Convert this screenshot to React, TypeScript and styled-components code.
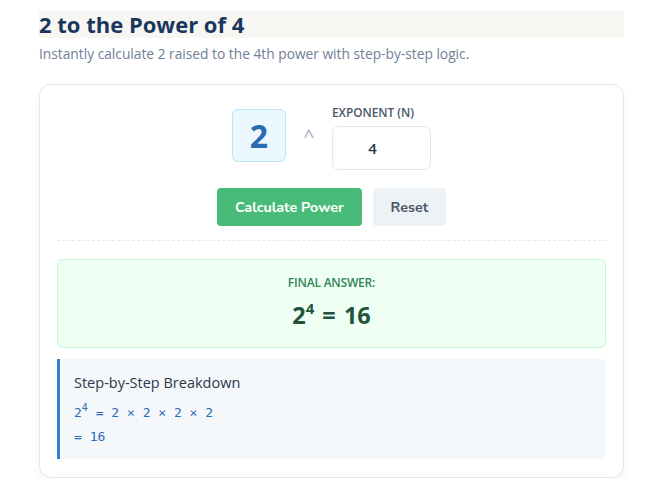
import React from "react";
import styled, { createGlobalStyle } from "styled-components";

const Global = createGlobalStyle`
  html, body { margin: 0; padding: 0; background: #ffffff; }
  body { font-family: "Open Sans", "Noto Sans", sans-serif; }
  * { box-sizing: border-box; }
`;

const Page = styled.div`
  margin: 11px 31px 0 39px;
`;

const Title = styled.h1`
  margin: 0;
  background: #f6f6f2;
  color: #1a365d;
  font-family: "Open Sans", "Noto Sans", sans-serif;
  font-size: 22px;
  font-weight: 700;
  line-height: 27px;
`;

const Subtitle = styled.p`
  margin: 7px 0 0;
  color: #718096;
  font-size: 13.75px;
  line-height: 18px;
`;

const Card = styled.div`
  margin-top: 21px;
  border: 1px solid #e2e8f0;
  border-radius: 12px;
  box-shadow: 0 4px 8px rgba(0, 0, 0, 0.05);
  padding: 19px 17px 18px;
  background: #fff;
`;

const InputRow = styled.div`
  display: flex;
  justify-content: center;
  align-items: flex-end;
`;

const Base = styled.div`
  width: 54px;
  height: 53px;
  margin-bottom: 8px;
  border: 1px solid #bee3f8;
  border-radius: 6px;
  background: #ebf8ff;
  color: #2b6cb0;
  font-family: "Noto Sans", sans-serif;
  font-size: 32px;
  font-weight: 700;
  display: flex;
  align-items: center;
  justify-content: center;
`;

const Caret = styled.span`
  width: 46px;
  margin-bottom: 24px;
  text-align: center;
  color: #a0aec0;
  font-size: 19px;
  line-height: 20px;
`;

const Field = styled.div`
  display: flex;
  flex-direction: column;
`;

const Label = styled.label`
  font-size: 11.8px;
  font-weight: 600;
  color: #4a5568;
  line-height: 16px;
  margin-bottom: 6px;
`;

const Input = styled.div`
  width: 99px;
  height: 44px;
  padding-right: 18px;
  border: 1px solid #e2e8f0;
  border-radius: 6px;
  display: flex;
  align-items: center;
  justify-content: center;
  color: #2d3748;
  font-size: 15px;
  font-weight: 600;
`;

const Buttons = styled.div`
  display: flex;
  justify-content: center;
  gap: 11px;
  margin-top: 18px;
  padding-bottom: 14px;
  border-bottom: 1px dashed #e2e8f0;
`;

const Button = styled.button<{ $primary?: boolean }>`
  height: 38px;
  padding: 0 18px;
  border: none;
  border-radius: 4px;
  background: ${(p) => (p.$primary ? "#48bb78" : "#edf2f7")};
  color: ${(p) => (p.$primary ? "#ffffff" : "#4a5568")};
  font-family: "Nunito", "Noto Sans", sans-serif;
  font-size: 14.3px;
  font-weight: 700;
`;

const Answer = styled.div`
  margin-top: 18px;
  border: 1px solid #c6f6d5;
  border-radius: 6px;
  background: #f0fff4;
  padding: 15px 0 16px;
  text-align: center;
`;

const AnswerLabel = styled.div`
  color: #2f855a;
  font-size: 12px;
  font-weight: 600;
  line-height: 16px;
  letter-spacing: -0.2px;
`;

const AnswerValue = styled.div`
  margin-top: 9px;
  color: #22543d;
  font-size: 23.5px;
  font-weight: 700;
  line-height: 31px;
  word-spacing: 2px;
  sup { font-size: 15px; vertical-align: 10px; line-height: 0; }
`;

const Steps = styled.div`
  margin-top: 11px;
  border-left: 3px solid #3182ce;
  border-radius: 0 6px 6px 0;
  background: #f4f8fb;
  padding: 14px 14px 10px;
`;

const StepsTitle = styled.div`
  color: #2d3748;
  font-size: 14.5px;
  line-height: 20px;
  margin-bottom: 8px;
`;

const StepLine = styled.div`
  font-family: "DejaVu Sans Mono", "Liberation Mono", monospace;
  font-size: 13px;
  color: #2b6cb0;
  line-height: 24px;
  sup { font-size: 10px; vertical-align: 6px; line-height: 0; }
`;

export default function App() {
  return (
    <>
      <Global />
      <Page>
        <Title>2 to the Power of 4</Title>
        <Subtitle>Instantly calculate 2 raised to the 4th power with step-by-step logic.</Subtitle>
        <Card>
          <InputRow>
            <Base>2</Base>
            <Caret>^</Caret>
            <Field>
              <Label>EXPONENT (N)</Label>
              <Input>4</Input>
            </Field>
          </InputRow>
          <Buttons>
            <Button $primary>Calculate Power</Button>
            <Button>Reset</Button>
          </Buttons>
          <Answer>
            <AnswerLabel>FINAL ANSWER:</AnswerLabel>
            <AnswerValue>
              2<sup>4</sup> = 16
            </AnswerValue>
          </Answer>
          <Steps>
            <StepsTitle>Step-by-Step Breakdown</StepsTitle>
            <StepLine>
              2<sup>4</sup> = 2 × 2 × 2 × 2
            </StepLine>
            <StepLine>= 16</StepLine>
          </Steps>
        </Card>
      </Page>
    </>
  );
}
